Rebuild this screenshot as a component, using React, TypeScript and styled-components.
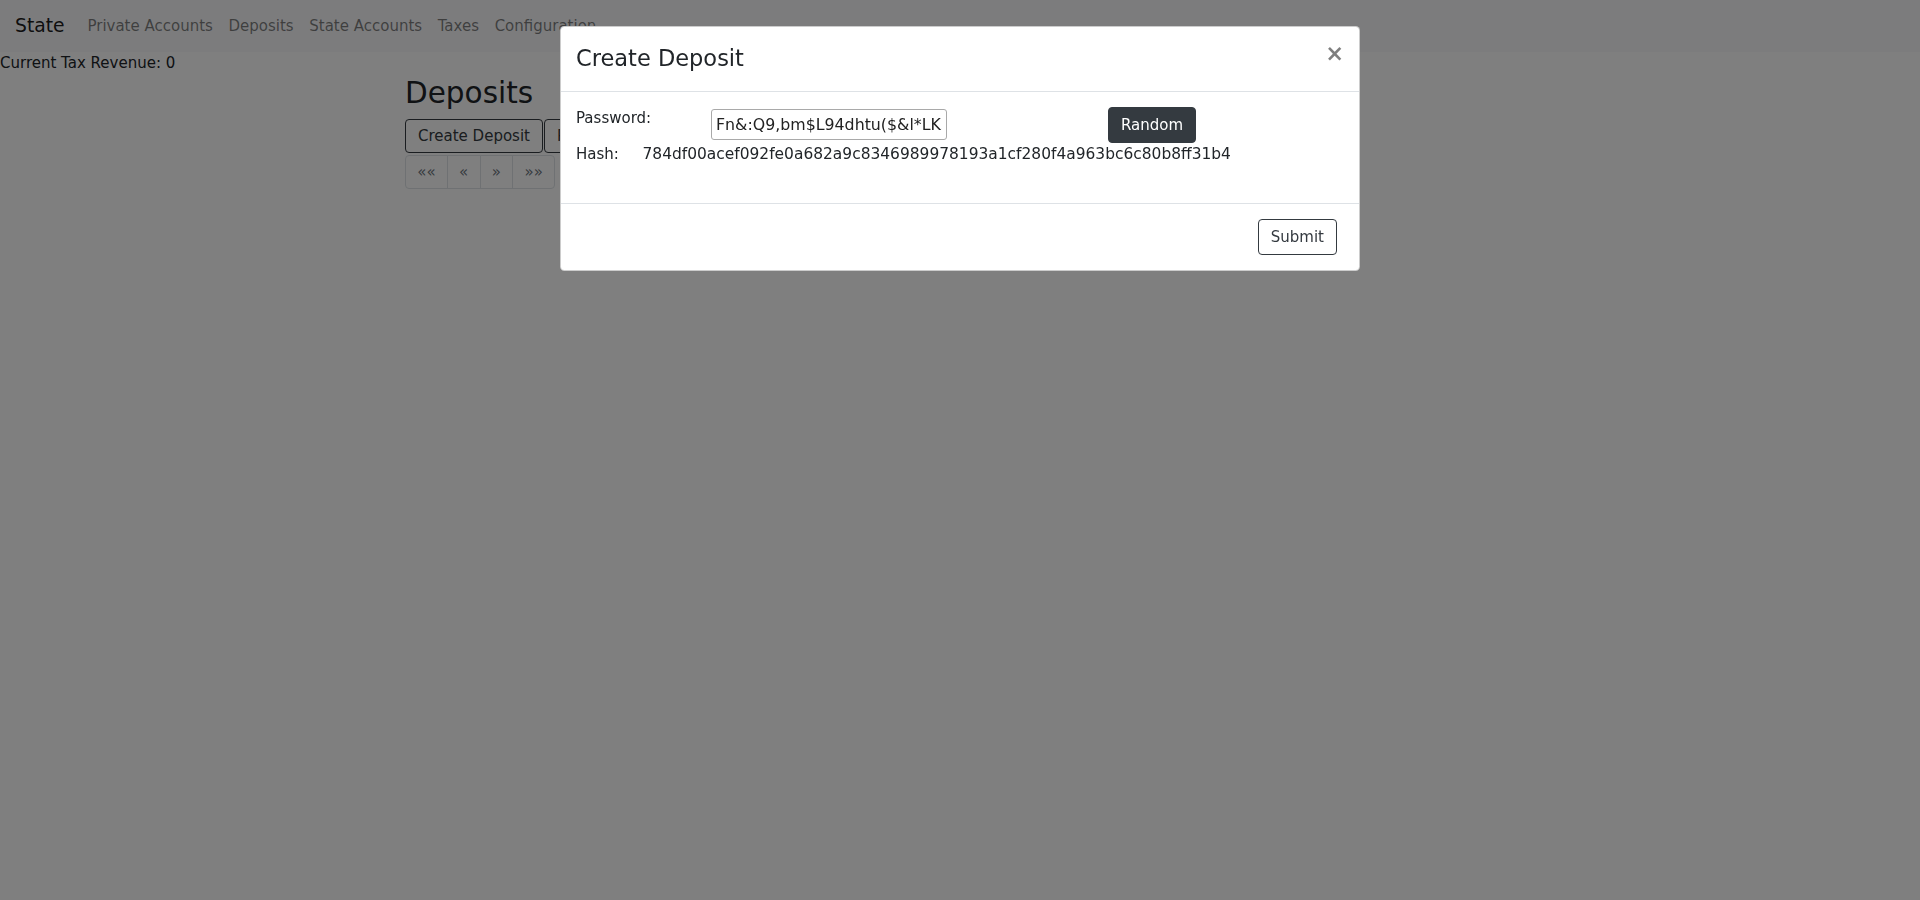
import React from "react";
import styled, { createGlobalStyle } from "styled-components";

const GlobalStyle = createGlobalStyle`
  *, *::before, *::after { box-sizing: border-box; }
  html, body { margin: 0; padding: 0; }
  body {
    font-family: "DejaVu Sans", "Open Sans", sans-serif;
    font-size: 15px;
    line-height: 1.5;
    color: #212529;
    background: #fff;
    min-height: 900px;
  }
`;

const Navbar = styled.nav`
  display: flex;
  align-items: center;
  height: 52px;
  padding: 0 15px;
  background: #f8f9fa;
`;

const Brand = styled.a`
  font-size: 18.75px;
  line-height: 28px;
  color: rgba(0, 0, 0, 0.9);
  margin-right: 15px;
  text-decoration: none;
`;

const NavList = styled.ul`
  display: flex;
  list-style: none;
  margin: 0;
  padding: 0;
`;

const NavLink = styled.a`
  display: block;
  padding: 0 7.8px;
  line-height: 22.5px;
  color: rgba(0, 0, 0, 0.5);
  text-decoration: none;
`;

const Revenue = styled.div`
  line-height: 22.5px;
`;

const Container = styled.main`
  width: 1140px;
  margin: 0 auto;
  padding: 0 15px;
`;

const Heading = styled.h2`
  font-size: 29.5px;
  font-weight: 400;
  line-height: 36px;
  margin: 0 0 8.5px;
`;

const ButtonRow = styled.div`
  display: flex;
  gap: 1px;
`;

const Button = styled.button<{ $variant?: "dark" | "outline" }>`
  font-family: inherit;
  font-size: 15px;
  line-height: 22.5px;
  padding: 5.625px 12px;
  border-radius: 4px;
  border: 1px solid #343a40;
  cursor: pointer;
  background: ${(p) => (p.$variant === "dark" ? "#343a40" : "transparent")};
  color: ${(p) => (p.$variant === "dark" ? "#fff" : "#343a40")};
`;

const PageButton = styled(Button)`
  height: 34px;
  padding-top: 0;
  padding-bottom: 0;
`;

const Pagination = styled.ul`
  display: flex;
  list-style: none;
  margin: 2px 0 0;
  padding: 0;
`;

const PageItem = styled.li<{ $first?: boolean; $last?: boolean }>`
  height: 34px;
  padding: 0 11.25px;
  display: flex;
  align-items: center;
  font-size: 15px;
  color: #6c757d;
  border: 1px solid #dee2e6;
  margin-left: ${(p) => (p.$first ? "0" : "-1px")};
  border-radius: ${(p) =>
    p.$first ? "4px 0 0 4px" : p.$last ? "0 4px 4px 0" : "0"};
`;

const Backdrop = styled.div`
  position: fixed;
  inset: 0;
  background: rgba(0, 0, 0, 0.5);
  overflow-y: auto;
`;

const Dialog = styled.div`
  width: 800px;
  margin: 26.25px auto;
`;

const Content = styled.div`
  background: #fff;
  border: 1px solid rgba(0, 0, 0, 0.2);
  border-radius: 4.5px;
  display: flex;
  flex-direction: column;
`;

const Header = styled.div`
  display: flex;
  justify-content: space-between;
  align-items: flex-start;
  padding: 15px;
  border-bottom: 1px solid #dee2e6;
`;

const Title = styled.h4`
  margin: 0;
  font-size: 22.5px;
  font-weight: 400;
  line-height: 33.75px;
`;

const Close = styled.button`
  background: none;
  border: 0;
  padding: 0;
  margin: 0;
  font-family: inherit;
  font-size: 22.5px;
  font-weight: 700;
  line-height: 1;
  color: #000;
  opacity: 0.5;
  cursor: pointer;
`;

const Body = styled.div`
  padding: 15px 15px 37.75px;
`;

const FieldRow = styled.div`
  display: grid;
  grid-template-columns: 135px 397px auto;
  align-items: start;
`;

const FieldLabel = styled.label`
  line-height: 22.5px;
`;

const PasswordInput = styled.input`
  margin-top: 2px;
  width: 236px;
  height: 31px;
  padding: 0 4px;
  border: 1px solid #a9a9a9;
  border-radius: 3px;
  font-family: inherit;
  font-size: 15.8px;
  color: #222;
  background: #fff;
`;

const RandomButton = styled(Button)`
  justify-self: start;
`;

const HashRow = styled.div`
  display: grid;
  grid-template-columns: 66.5px 1fr;
  line-height: 22.5px;
`;

const HashValue = styled.span`
  font-size: 15.45px;
`;

const Footer = styled.div`
  display: flex;
  justify-content: flex-end;
  padding: 11.25px 22px 11.25px;
  border-top: 1px solid #dee2e6;
`;

const SubmitButton = styled(Button)`
  margin: 3.75px 0;
`;

export default function App() {
  const links = ["Private Accounts", "Deposits", "State Accounts", "Taxes", "Configuration"];
  const pages = ["««", "«", "»", "»»"];
  return (
    <>
      <GlobalStyle />
      <Navbar>
        <Brand href="#">State</Brand>
        <NavList>
          {links.map((l) => (
            <li key={l}>
              <NavLink href="#">{l}</NavLink>
            </li>
          ))}
        </NavList>
      </Navbar>
      <Revenue>Current Tax Revenue: 0</Revenue>
      <Container>
        <Heading>Deposits</Heading>
        <ButtonRow>
          <PageButton>Create Deposit</PageButton>
          <PageButton>Refresh</PageButton>
        </ButtonRow>
        <Pagination>
          {pages.map((p, i) => (
            <PageItem key={i} $first={i === 0} $last={i === pages.length - 1}>
              {p}
            </PageItem>
          ))}
        </Pagination>
      </Container>
      <Backdrop>
        <Dialog>
          <Content>
            <Header>
              <Title>Create Deposit</Title>
              <Close aria-label="Close">×</Close>
            </Header>
            <Body>
              <FieldRow>
                <FieldLabel>Password:</FieldLabel>
                <PasswordInput readOnly defaultValue="Fn&:Q9,bm$L94dhtu($&l*LK5x#2qW" />
                <RandomButton $variant="dark">Random</RandomButton>
              </FieldRow>
              <HashRow>
                <span>Hash:</span>
                <HashValue>784df00acef092fe0a682a9c8346989978193a1cf280f4a963bc6c80b8ff31b4</HashValue>
              </HashRow>
            </Body>
            <Footer>
              <SubmitButton $variant="outline">Submit</SubmitButton>
            </Footer>
          </Content>
        </Dialog>
      </Backdrop>
    </>
  );
}
